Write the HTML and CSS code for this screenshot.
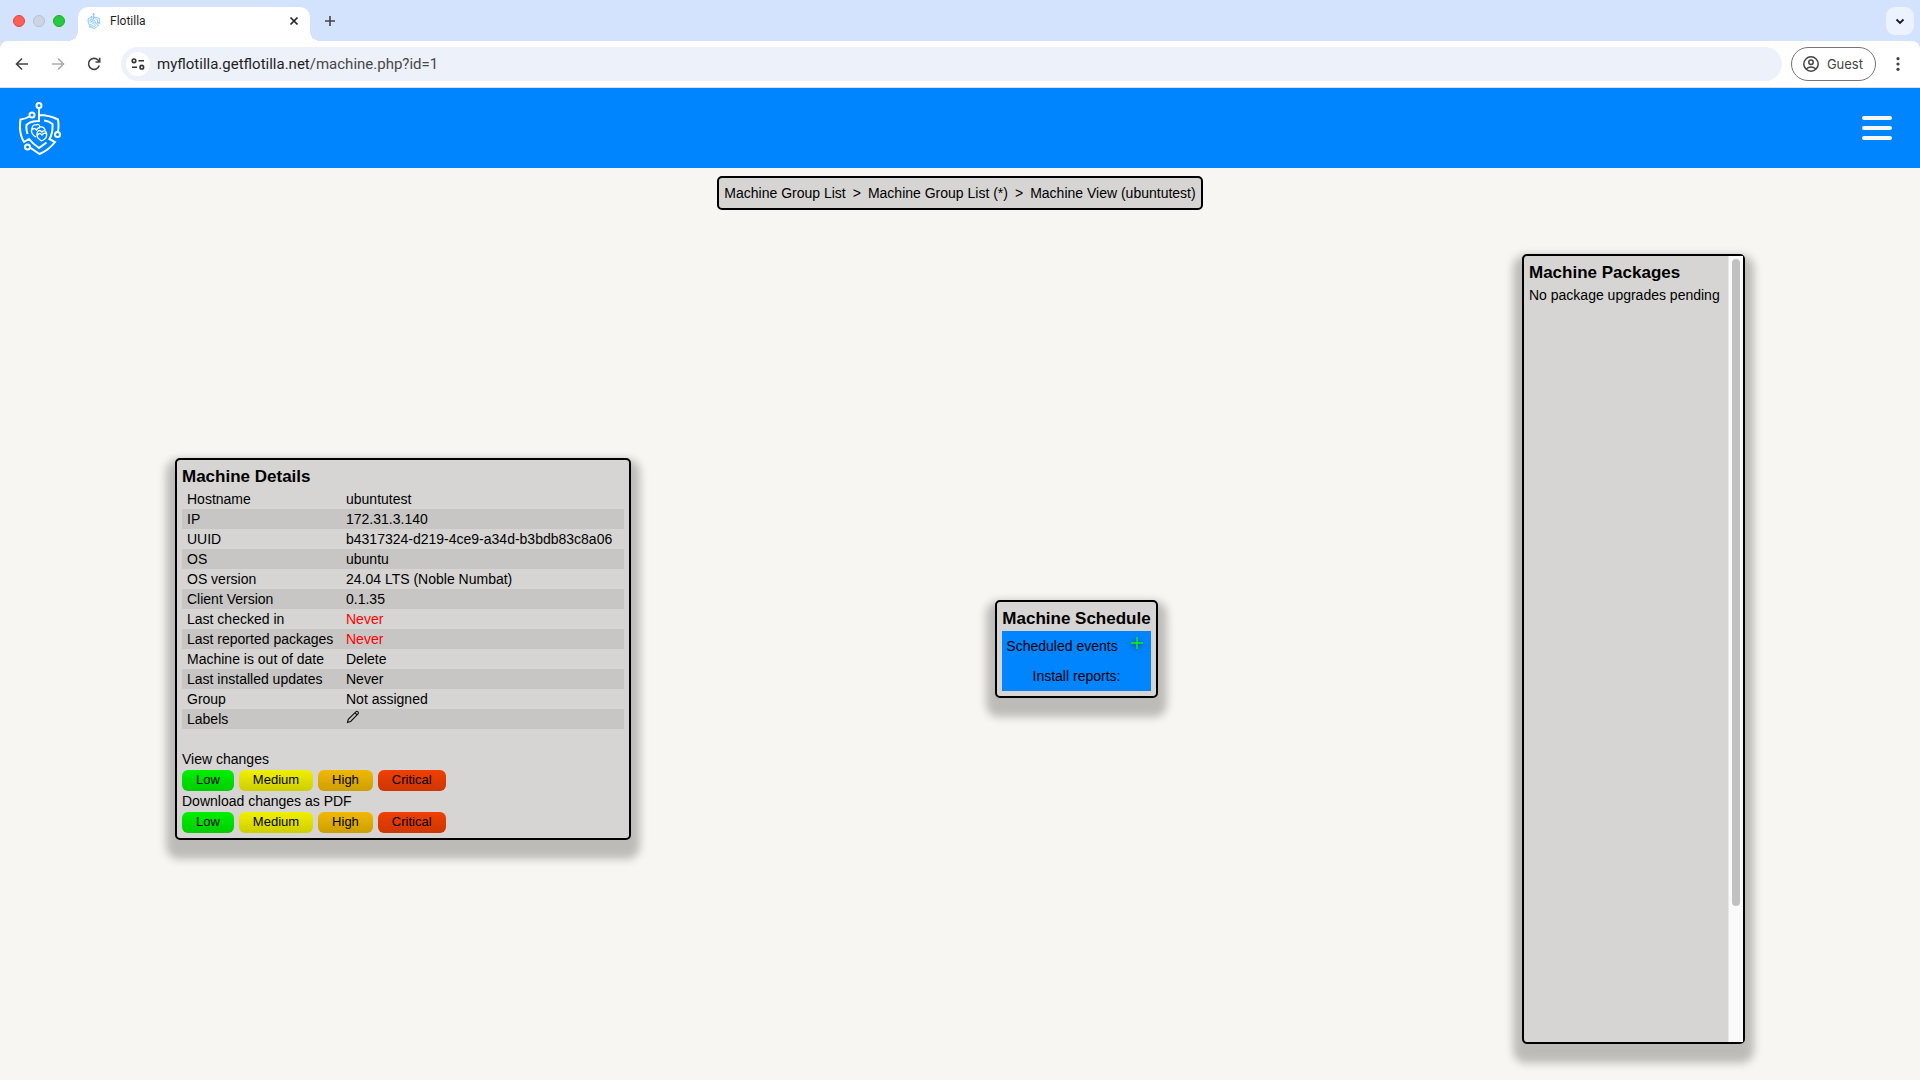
FILE: index.html
```html
<!DOCTYPE html>
<html lang="en">
<head>
<meta charset="utf-8">
<title>Flotilla</title>
<link rel="stylesheet" href="styles.css">
</head>
<body>
<svg class="defs" aria-hidden="true">
  <symbol id="logo" viewBox="0 0 44 54">
    <g fill="none" stroke="currentColor" stroke-width="2">
      <circle cx="21" cy="4.500" r="2.500"/><circle cx="14" cy="14" r="2.500"/><circle cx="39.500" cy="33.500" r="2.500"/><circle cx="9.500" cy="46" r="2.500"/>
      <path d="M21 7.500V20Q12 20 8.500 24Q8 29 9.500 33M11.500 15.500Q7 18 2.500 18.500Q.5 32 6 41L11 38Q15 43 21 47L28.500 41.500M21 14Q31 14 40 18.500Q41 25 40 30.500M26 19.500Q31 20 34.500 23Q35 32 31.500 38L37 41Q31 49 21.500 53L12 46.500"/>
      <path stroke-width="1.300" d="M18 36Q12 33 14 27Q15 23 18 24Q21 22 22 26Q26 25 27 29M14 29Q16 26 18.500 29Q20 26 22 27M23.500 40Q17 36 19.500 31Q21 28 24 31Q27 28 28.500 32Q30 37 23.500 40M19.500 34Q22 31 24 34Q26 31 28.500 33"/>
    </g>
  </symbol>
</svg>

<div class="tabstrip">
  <div class="lights"><span class="light red"></span><span class="light idle"></span><span class="light green"></span></div>
  <div class="tab">
    <svg class="favicon"><use href="#logo"/></svg>
    <span class="tab-title">Flotilla</span>
    <button class="plain tab-close" aria-label="Close tab"><svg viewBox="0 0 10 10" width="10" height="10"><path d="M1.500 1.500l7 7m0-7l-7 7" stroke="#222" stroke-width="1.700"/></svg></button>
  </div>
  <button class="plain new-tab" aria-label="New tab"><svg viewBox="0 0 12 12" width="12" height="12"><path d="M6 1v10M1 6h10" stroke="#444" stroke-width="1.600"/></svg></button>
  <button class="plain tab-search" aria-label="Search tabs"><svg viewBox="0 0 10 10" width="10" height="10"><path d="M1.500 3.500L5 7l3.500-3.500" fill="none" stroke="#1f1f1f" stroke-width="1.900"/></svg></button>
</div>

<div class="toolbar-frame">
<div class="toolbar">
  <button class="plain nav" aria-label="Back"><svg viewBox="0 0 14 14" width="14" height="14"><path d="M13 7H2M7 1.500L1.500 7L7 12.500" fill="none" stroke="#444" stroke-width="1.600"/></svg></button>
  <button class="plain nav" aria-label="Forward"><svg viewBox="0 0 14 14" width="14" height="14"><path d="M1 7h11M7 1.500L12.500 7L7 12.500" fill="none" stroke="#aaa" stroke-width="1.600"/></svg></button>
  <button class="plain nav" aria-label="Reload"><svg viewBox="0 0 14 14" width="14" height="14"><path d="M12.300 8.500A5.500 5.500 0 1 1 11 3L12.500 4.700M12.700 .8V5H8.500" fill="none" stroke="#444" stroke-width="1.600"/></svg></button>
  <div class="omnibox">
    <button class="plain site-info" aria-label="Site information"><svg viewBox="0 0 14 12" width="14" height="12"><g fill="none" stroke="#333" stroke-width="1.600"><circle cx="3" cy="2.800" r="1.800"/><path d="M7.500 2.800H13M1 9.200H6"/><circle cx="10.800" cy="9.200" r="1.800"/></g></svg></button>
    <span class="url">myflotilla.getflotilla.net<span class="path">/machine.php?id=1</span></span>
  </div>
  <button class="guest"><svg viewBox="0 0 16 16" width="16" height="16"><g fill="none" stroke="#444" stroke-width="1.500"><circle cx="8" cy="8" r="7.200"/><circle cx="8" cy="6.300" r="2.200"/><path d="M3 13Q8 9 13 13"/></g></svg>Guest</button>
  <button class="plain more" aria-label="More"><svg viewBox="0 0 4 14" width="4" height="14" fill="#444"><circle cx="2" cy="1.700" r="1.600"/><circle cx="2" cy="7" r="1.600"/><circle cx="2" cy="12.300" r="1.600"/></svg></button>
</div>
</div>

<header class="site-header">
  <a href="#" class="brand" aria-label="Flotilla"><svg class="logo"><use href="#logo"/></svg></a>
  <button class="plain menu" aria-label="Menu"><span></span><span></span><span></span></button>
</header>

<nav class="breadcrumb" aria-label="Breadcrumb"><a href="#">Machine Group List</a><span>&gt;</span><a href="#">Machine Group List (*)</a><span>&gt;</span><a href="#">Machine View (ubuntutest)</a></nav>

<main class="panels">
  <section class="panel">
    <h3>Machine Details</h3>
    <table class="details">
      <tr><th scope="row">Hostname</th><td>ubuntutest</td></tr>
      <tr><th scope="row">IP</th><td>172.31.3.140</td></tr>
      <tr><th scope="row">UUID</th><td>b4317324-d219-4ce9-a34d-b3bdb83c8a06</td></tr>
      <tr><th scope="row">OS</th><td>ubuntu</td></tr>
      <tr><th scope="row">OS version</th><td>24.04 LTS (Noble Numbat)</td></tr>
      <tr><th scope="row">Client Version</th><td>0.1.35</td></tr>
      <tr><th scope="row">Last checked in</th><td class="alert">Never</td></tr>
      <tr><th scope="row">Last reported packages</th><td class="alert">Never</td></tr>
      <tr><th scope="row">Machine is out of date</th><td><a href="#">Delete</a></td></tr>
      <tr><th scope="row">Last installed updates</th><td>Never</td></tr>
      <tr><th scope="row">Group</th><td><a href="#">Not assigned</a></td></tr>
      <tr><th scope="row">Labels</th><td><button class="plain edit" aria-label="Edit labels"><svg viewBox="0 0 14 14" width="14" height="14"><path d="M1.500 12.500L2.300 9.300L9.800 1.800Q11 .8 12 1.800Q13 2.800 12 4L4.700 11.500ZM9 2.800L11.200 5" fill="none" stroke="#111" stroke-width="1.100"/></svg></button></td></tr>
    </table>
    <p>View changes</p>
    <div class="levels"><button class="low">Low</button><button class="medium">Medium</button><button class="high">High</button><button class="critical">Critical</button></div>
    <p>Download changes as PDF</p>
    <div class="levels"><button class="low">Low</button><button class="medium">Medium</button><button class="high">High</button><button class="critical">Critical</button></div>
  </section>

  <section class="panel">
    <h3>Machine Schedule</h3>
    <div class="schedule">
      <div class="events">Scheduled events<button class="plain add" aria-label="Add event"><svg viewBox="0 0 12 12" width="12" height="12"><path d="M6 0v12M0 6h12" stroke="#0f0" stroke-width="1.400"/></svg></button></div>
      <div class="reports">Install reports:</div>
    </div>
  </section>

  <section class="panel packages">
    <div class="packages-body">
      <h3>Machine Packages</h3>
      <p>No package upgrades pending</p>
    </div>
    <div class="scrollbar" aria-hidden="true"><div class="thumb"></div></div>
  </section>
</main>
</body>
</html>
```
FILE: styles.css
```css
* { box-sizing: border-box; }
body {
  margin: 0;
  min-height: 100vh;
  display: flex;
  flex-direction: column;
  background: #f7f6f2;
  color: #000;
  font: 14px/20px "Liberation Sans", Arial, sans-serif;
}
a { color: inherit; text-decoration: none; }
p { margin: 0; }
svg { display: block; }
.defs { position: absolute; width: 0; height: 0; }
button { font: inherit; color: inherit; cursor: pointer; }
.plain {
  display: flex;
  align-items: center;
  justify-content: center;
  padding: 0;
  border: 0;
  background: none;
}

/* Browser frame */
.tabstrip {
  display: flex;
  align-items: center;
  height: 41px;
  padding: 0 6px 0 13px;
  background: #d3e2fd;
}
.lights { display: flex; gap: 8px; }
.light { width: 12px; height: 12px; border-radius: 50%; border: 1px solid; }
.red { background: #ff5f57; border-color: #e0443e; }
.idle { background: #cdd5e2; border-color: #b9c0cc; }
.green { background: #28c840; border-color: #1aab29; }
.tab {
  position: relative;
  display: flex;
  align-items: center;
  align-self: flex-end;
  width: 232px;
  height: 34px;
  margin-left: 13px;
  padding: 0 11px 6px 9px;
  border-radius: 10px 10px 0 0;
  background: #fff;
  font: 12px/16px Roboto, sans-serif;
  color: #1f1f1f;
}
.tab::before,
.tab::after {
  content: "";
  position: absolute;
  bottom: 0;
  width: 10px;
  height: 10px;
}
.tab::before { left: -10px; background: radial-gradient(circle at 0 0, transparent 10px, #fff 10px); }
.tab::after { right: -10px; background: radial-gradient(circle at 100% 0, transparent 10px, #fff 10px); }
.favicon { width: 14px; height: 16px; color: #3b9cf5; }
.tab-title { flex: 1; margin-left: 9px; }
.new-tab { margin-left: 14px; }
.tab-search {
  width: 28px;
  height: 28px;
  margin-left: auto;
  border-radius: 9px;
  background: #ecf2fe;
}
.toolbar-frame { background: #d3e2fd; }
.toolbar {
  display: flex;
  align-items: center;
  height: 47px;
  padding: 0 20px 1px 15px;
  border-radius: 8px 8px 0 0;
  background: #fff;
  box-shadow: inset 0 -1px #dcdfe4;
}
.nav { width: 14px; margin-right: 22px; }
.omnibox {
  display: flex;
  align-items: center;
  flex: 1;
  height: 34px;
  margin-left: -2px;
  padding: 0 5px;
  border-radius: 17px;
  background: #edf1fa;
}
.site-info { width: 24px; height: 24px; border-radius: 50%; background: #fff; }
.url { margin-left: 7px; font: 15px/20px Roboto, sans-serif; color: #1f1f1f; }
.path { color: #474747; }
.guest {
  display: flex;
  align-items: center;
  gap: 8px;
  height: 34px;
  margin: 0 20px 0 9px;
  padding: 0 12px 0 11px;
  border: 1px solid #757575;
  border-radius: 17px;
  background: #fff;
  font: 13px/16px Inter, sans-serif;
  color: #444;
}

/* Application header */
.site-header {
  display: flex;
  align-items: center;
  justify-content: space-between;
  height: 80px;
  padding: 0 28px 0 18px;
  background: #0085ff;
}
.logo { width: 44px; height: 54px; color: #fff; }
.menu { flex-direction: column; gap: 6px; }
.menu span { width: 30px; height: 4px; border-radius: 2px; background: #f7f6f2; }

.breadcrumb {
  display: flex;
  align-self: center;
  gap: 7px;
  margin-top: 8px;
  padding: 5px;
  border: 2px solid #000;
  border-radius: 5px;
  background: #d6d5d3;
}

/* Panels */
.panels {
  display: flex;
  flex: 1;
  align-items: center;
  justify-content: space-between;
  padding: 44px 175px 36px;
}
.panel {
  padding: 5px;
  border: 2px solid #000;
  border-radius: 5px;
  background: #d6d5d3;
  box-shadow: 0 10px 8px 9px rgba(0, 0, 0, 0.24);
}
h3 { margin: 0; font-size: 17px; line-height: 24px; }
.details { margin-bottom: 20px; border-collapse: collapse; }
.details tr:nth-child(even) { background: #c7c6c4; }
.details th,
.details td { height: 20px; padding: 0 5px; line-height: 20px; }
.details th { width: 159px; font-weight: normal; text-align: left; }
.details td { width: 283px; }
.details .alert { color: #f00; }
.edit { margin-bottom: 4px; }
.levels { display: flex; gap: 5px; padding-top: 1px; }
.levels button {
  height: 21px;
  padding: 0 14px 1px;
  border: 0;
  border-radius: 6px;
  font-size: 13px;
  line-height: 18px;
}
.low { background: linear-gradient(#00f000, #00cd00); }
.medium { background: linear-gradient(#f0f000, #cdcd00); }
.high { background: linear-gradient(#f0b900, #cd9e00); }
.critical { background: linear-gradient(#f04000, #cd3600); }

.schedule { background: #0085ff; text-align: center; line-height: 30px; }
.events { display: flex; justify-content: space-between; padding: 0 8px 0 4px; }
.add { align-self: flex-start; height: 24px; filter: drop-shadow(0 1px 2px rgba(0, 0, 0, 0.6)); }

.packages { display: flex; align-self: stretch; padding: 0; }
.packages-body { min-width: 204px; padding: 5px; }
.scrollbar {
  width: 15px;
  padding: 3px;
  border-left: 1px solid #e8e8e8;
  background: #fafafa;
}
.thumb { width: 8px; height: 83%; border-radius: 4px; background: #c1c1c1; }
```
